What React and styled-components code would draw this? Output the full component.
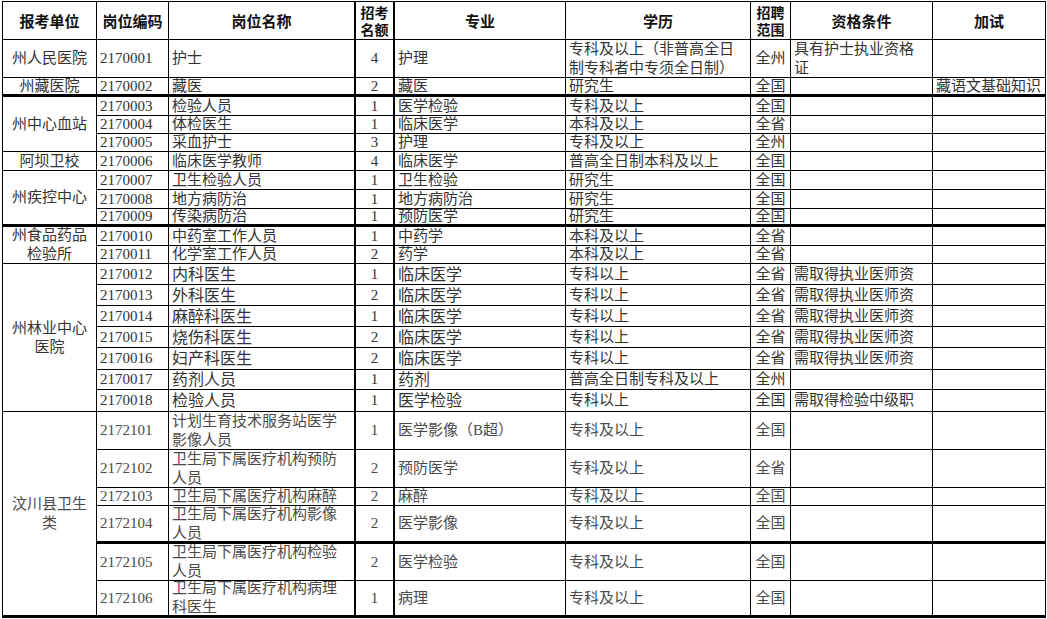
import React from 'react'
import styled, { createGlobalStyle } from 'styled-components'

const GlobalStyle = createGlobalStyle`
  html, body { margin: 0; padding: 0; background: #fff; }
  body { font-family: "Liberation Serif", "Noto Sans CJK SC", serif; }
`

const COLS = [94, 72, 187, 39, 171, 185, 40, 142, 113]
const ALIGN = ['center', 'left', 'left', 'center', 'left', 'left', 'center', 'left', 'left']
const THICK_RIGHT = [false, false, true, true, false, false, false, false, false]

const ROW_HEIGHTS = [
    38,
    38, 19, 19, 18, 18, 19, 19, 19, 18, 19, 18,
    21, 21, 21, 21, 22, 20, 22,
    38, 38, 18, 38, 37, 37,
]

const HEADERS = ['报考单位', '岗位编码', '岗位名称', '招考\n名额', '专业', '学历', '招聘\n范围', '资格条件', '加试']

const DOC = '需取得执业医师资'
const BUREAU = '卫生局下属医疗机构'

const GROUPS = [
    { unit: '州人民医院', rows: [
        ['2170001', '护士', '4', '护理', '专科及以上（非普高全日\n制专科者中专须全日制）', '全州', '具有护士执业资格\n证', ''],
    ] },
    { unit: '州藏医院', thick: true, rows: [
        ['2170002', '藏医', '2', '藏医', '研究生', '全国', '', '藏语文基础知识'],
    ] },
    { unit: '州中心血站', rows: [
        ['2170003', '检验人员', '1', '医学检验', '专科及以上', '全国', '', ''],
        ['2170004', '体检医生', '1', '临床医学', '本科及以上', '全省', '', ''],
        ['2170005', '采血护士', '3', '护理', '专科及以上', '全州', '', ''],
    ] },
    { unit: '阿坝卫校', rows: [
        ['2170006', '临床医学教师', '4', '临床医学', '普高全日制本科及以上', '全国', '', ''],
    ] },
    { unit: '州疾控中心', thick: true, rows: [
        ['2170007', '卫生检验人员', '1', '卫生检验', '研究生', '全国', '', ''],
        ['2170008', '地方病防治', '1', '地方病防治', '研究生', '全国', '', ''],
        ['2170009', '传染病防治', '1', '预防医学', '研究生', '全国', '', ''],
    ] },
    { unit: '州食品药品\n检验所', rows: [
        ['2170010', '中药室工作人员', '1', '中药学', '本科及以上', '全省', '', ''],
        ['2170011', '化学室工作人员', '2', '药学', '本科及以上', '全省', '', ''],
    ] },
    { unit: '州林业中心\n医院', big: true, rows: [
        ['2170012', '内科医生', '1', '临床医学', '专科以上', '全省', DOC, ''],
        ['2170013', '外科医生', '2', '临床医学', '专科以上', '全省', DOC, ''],
        ['2170014', '麻醉科医生', '1', '临床医学', '专科以上', '全省', DOC, ''],
        ['2170015', '烧伤科医生', '2', '临床医学', '专科以上', '全省', DOC, ''],
        ['2170016', '妇产科医生', '2', '临床医学', '专科以上', '全省', DOC, ''],
        ['2170017', '药剂人员', '1', '药剂', '普高全日制专科及以上', '全州', '', ''],
        ['2170018', '检验人员', '1', '医学检验', '专科以上', '全国', '需取得检验中级职', ''],
    ] },
    { unit: '汶川县卫生\n类', thick: true, light: true, rows: [
        ['2172101', '计划生育技术服务站医学\n影像人员', '1', '医学影像（B超）', '专科及以上', '全国', '', ''],
        ['2172102', BUREAU + '预防\n人员', '2', '预防医学', '专科及以上', '全省', '', ''],
        ['2172103', BUREAU + '麻醉', '2', '麻醉', '专科及以上', '全国', '', ''],
        ['2172104', BUREAU + '影像\n人员', '2', '医学影像', '专科及以上', '全国', '', '', true],
        ['2172105', BUREAU + '检验\n人员', '2', '医学检验', '专科及以上', '全国', '', ''],
        ['2172106', BUREAU + '病理\n科医生', '1', '病理', '专科及以上', '全国', '', ''],
    ] },
]

const App = () => {
    const cells = []
    HEADERS.forEach((h, c) => cells.push(
        <HeadCell key={'h' + c} $thickRight={THICK_RIGHT[c]} $stacked={h.includes('\n')}>{h}</HeadCell>
    ))
    GROUPS.forEach((group, g) => {
        group.rows.forEach((row, r) => {
            const last = r === group.rows.length - 1
            const thickRow = (last && group.thick) || row[8] === true
            if (r === 0) {
                cells.push(
                    <Cell key={`u${g}`} $align="center" $span={group.rows.length}
                        $thickBottom={group.thick} $light={group.light}>
                        {group.unit}
                    </Cell>
                )
            }
            row.slice(0, 8).forEach((text, i) => {
                const c = i + 1
                cells.push(
                    <Cell key={`c${g}-${r}-${c}`} $align={ALIGN[c]} $thickRight={THICK_RIGHT[c]}
                        $thickBottom={thickRow} $light={group.light}
                        $size={group.big && (c === 2 || c === 4) ? 16 : 15}>
                        {text}
                    </Cell>
                )
            })
        })
    })
    return (
        <>
            <GlobalStyle />
            <Page>
                <Sheet>{cells}</Sheet>
            </Page>
        </>
    )
}

export default App

const Page = styled.div`
    padding: 1px 0 0 2px;
    width: 1047px;
    height: 619px;
    box-sizing: border-box;
    overflow: hidden;
`
const Sheet = styled.div`
    display: grid;
    grid-template-columns: ${COLS.map(w => w + 'px').join(' ')};
    grid-template-rows: ${ROW_HEIGHTS.map(h => h + 'px').join(' ')};
    width: ${COLS.reduce((a, b) => a + b, 0)}px;
    border-top: 1px solid #000;
    border-left: 1px solid #000;
    box-sizing: content-box;
`
const BaseCell = styled.div`
    box-sizing: border-box;
    display: flex;
    align-items: center;
    overflow: hidden;
    white-space: pre-line;
    border-right: ${p => p.$thickRight ? 2 : 1}px solid #000;
    border-bottom: ${p => p.$thickBottom ? 3 : 1}px solid #000;
`
const HeadCell = styled(BaseCell)`
    justify-content: center;
    text-align: center;
    font-family: "Noto Sans CJK SC", sans-serif;
    font-weight: 700;
    font-size: ${p => p.$stacked ? 14 : 15}px;
    line-height: 17px;
    color: #111;
`
const Cell = styled(BaseCell)`
    grid-row: span ${p => p.$span || 1};
    justify-content: ${p => p.$align === 'center' ? 'center' : 'flex-start'};
    text-align: ${p => p.$align};
    padding: 0 2px 0 ${p => p.$align === 'center' ? 2 : 3}px;
    font-size: ${p => p.$size || 15}px;
    line-height: 19px;
    color: ${p => p.$light ? '#4a4a4a' : '#333'};
`
